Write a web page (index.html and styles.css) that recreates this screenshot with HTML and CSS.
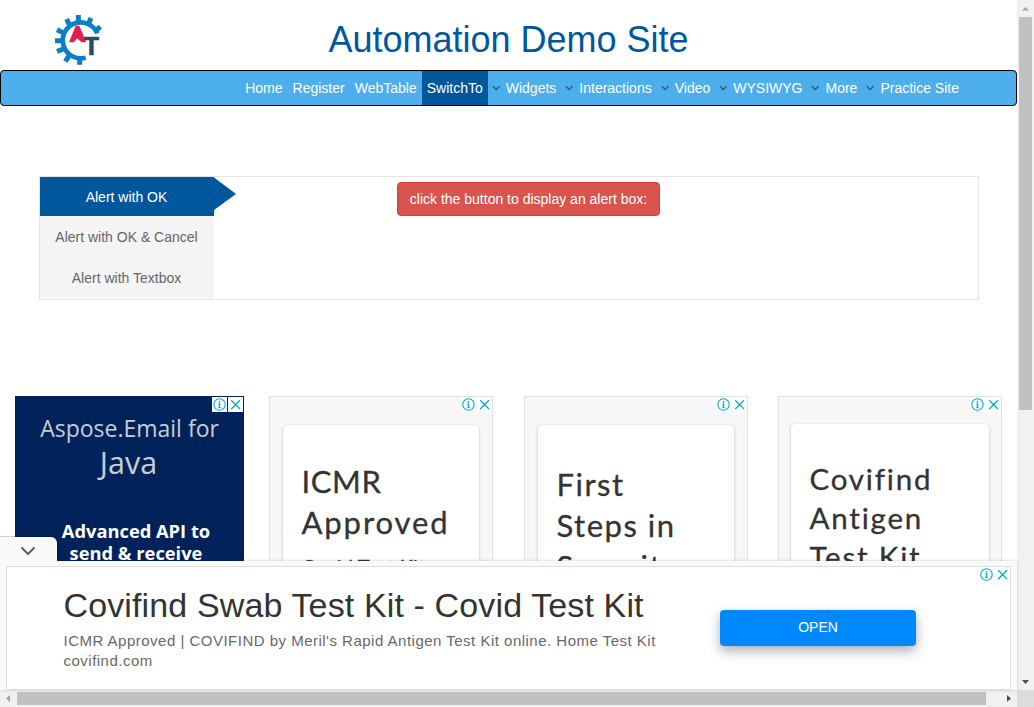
FILE: index.html
```html
<!DOCTYPE html>
<html lang="en">
<head>
<meta charset="utf-8">
<title>Automation Demo Site</title>
<link rel="stylesheet" href="styles.css">
</head>
<body>
<svg class="defs" width="0" height="0" aria-hidden="true">
  <symbol id="info" viewBox="0 0 15 15"><circle cx="7.5" cy="7.5" r="5.7" fill="none" stroke="#00aecd" stroke-width="1.1"/><path d="M7.5 3.900v1.500M7.500 6.300v4.800" fill="none" stroke="#00aecd" stroke-width="1.500"/><path d="M6.300 6.700h1.200M6.100 10.800h2.800" fill="none" stroke="#00aecd" stroke-width=".8"/></symbol>
  <symbol id="close" viewBox="0 0 15 15"><path d="M3.2 3.2l8.8 8.8M12 3.2l-8.8 8.8" fill="none" stroke="#00aecd" stroke-width="1.3"/></symbol>
  <symbol id="chev" viewBox="0 0 13 8"><path d="M4.8 2.2l3.4 3.4 3.4-3.4" fill="none" stroke="#26506e" stroke-width="1.2"/></symbol>
</svg>
<div class="window">
  <div class="page">
    <main class="content">
      <header class="header">
        <svg class="logo" viewBox="0 0 240 210">
          <g stroke="#0a7fc8" fill="none">
            <path d="M172 100A54 54 0 1 0 137 173" stroke-width="14"/>
            <path stroke-width="15" d="M115 68V45M144 75L153 54M163 96L181 80M89 76L80 57M71 99L51 89M65 122H45M70 147L51 154M87 168L76 184M119 173V194"/>
          </g>
          <path d="M87 127L107 77H118L139 127H124L112 115L102 127z" fill="#dc244b"/>
          <text class="logo-t" x="131" y="165">T</text>
        </svg>
        <h1 class="title">Automation Demo Site</h1>
      </header>
      <nav class="nav">
        <a class="link">Home</a><a class="link">Register</a><a class="link">WebTable</a><a class="link active">SwitchTo</a><svg class="chev"><use href="#chev"/></svg><a class="link">Widgets</a><svg class="chev"><use href="#chev"/></svg><a class="link">Interactions</a><svg class="chev"><use href="#chev"/></svg><a class="link">Video</a><svg class="chev"><use href="#chev"/></svg><a class="link">WYSIWYG</a><svg class="chev"><use href="#chev"/></svg><a class="link">More</a><svg class="chev"><use href="#chev"/></svg><a class="link">Practice Site</a>
      </nav>
      <section class="panel">
        <div class="tabs">
          <a class="tab selected">Alert with OK</a>
          <a class="tab">Alert with OK &amp; Cancel</a>
          <a class="tab">Alert with Textbox</a>
        </div>
        <svg class="arrow" viewBox="0 0 22 33"><path d="M0 0.500L22 17L0 33z" fill="#00579c"/></svg>
        <button class="alert">click the button to display an alert box:</button>
      </section>
      <section class="ads">
        <div class="ad aspose">
          <div class="choices"><svg><use href="#info"/></svg><svg><use href="#close"/></svg></div>
          <div class="as-small">Aspose.Email for</div>
          <div class="as-big">Java</div>
          <div class="as-bold">Advanced API to<br>send &amp; receive</div>
        </div>
        <div class="ad framed">
          <div class="choices"><svg><use href="#info"/></svg><svg><use href="#close"/></svg></div>
          <div class="card icmr"><div class="big"><span class="tight">ICMR</span><br>Approved</div><div class="sub">Covid Test Kit</div></div>
        </div>
        <div class="ad framed">
          <div class="choices"><svg><use href="#info"/></svg><svg><use href="#close"/></svg></div>
          <div class="card first"><div class="big">First<br>Steps in<br>Security</div></div>
        </div>
        <div class="ad framed">
          <div class="choices"><svg><use href="#info"/></svg><svg><use href="#close"/></svg></div>
          <div class="card covi"><div class="big">Covifind<br>Antigen<br>Test Kit</div></div>
        </div>
      </section>
    </main>
    <aside class="anchor">
      <div class="handle"><svg viewBox="0 0 16 10"><path d="M1.500 1.500L8 8l6.500-6.500" fill="none" stroke="#616161" stroke-width="2"/></svg></div>
      <div class="banner">
        <div class="copy">
          <div class="headline">Covifind Swab Test Kit - Covid Test Kit</div>
          <div class="desc">ICMR Approved | COVIFIND by Meril's Rapid Antigen Test Kit online. Home Test Kit<br>covifind.com</div>
        </div>
        <button class="open">OPEN</button>
        <div class="choices"><svg><use href="#info"/></svg><svg><use href="#close"/></svg></div>
      </div>
    </aside>
  </div>
  <div class="vbar">
    <svg viewBox="0 0 17 17"><path d="M5 10.500h7L8.500 7z" fill="#a3a3a3"/></svg>
    <div class="vthumb"></div>
    <svg viewBox="0 0 17 17"><path d="M5 7h7l-3.500 4z" fill="#505050"/></svg>
  </div>
  <div class="hbar">
    <svg viewBox="0 0 17 17"><path d="M10 5v7L6 8.500z" fill="#a3a3a3"/></svg>
    <div class="hthumb"></div>
    <svg viewBox="0 0 17 17"><path d="M7 5v7l4-3.500z" fill="#505050"/></svg>
  </div>
  <div class="corner"></div>
</div>
</body>
</html>
```
FILE: styles.css
```css
* { box-sizing: border-box; }
body { margin: 0; overflow: hidden; font: 14px/20px "Liberation Sans", Arial, sans-serif; background: #fff; }
svg { display: block; }
.defs { position: absolute; }
.window { display: grid; grid-template: 690px 17px / 1017px 17px; width: 1034px; height: 707px; }
.page { display: flex; flex-direction: column; min-width: 0; min-height: 0; }
.content { height: 561px; overflow: hidden; }
.header { display: flex; height: 70px; padding-left: 40px; }
.logo { width: 80px; height: 70px; }
.logo-t { font: bold 75px "Liberation Sans", Arial, sans-serif; fill: #2c4a61; stroke: #2c4a61; stroke-width: 2px; }
.title { margin: 20px 0 0 208.4px; font-size: 36px; line-height: 40px; font-weight: 400; color: #00579c; white-space: nowrap; }
.nav { display: flex; height: 36px; padding-left: 239.2px; border: 1px solid #000; border-radius: 4px; background: #4daeec; }
.link { padding: 7px 5px; color: #fff; white-space: nowrap; }
.active { background: #00579c; }
.chev { width: 13px; height: 8px; margin-top: 13px; flex: none; }
.panel { display: flex; width: 940px; height: 124px; margin: 70px 0 0 39px; border: 1px solid #e5e5e5; }
.tabs { width: 174px; background: #f4f4f4; }
.tab { display: block; height: 41px; padding: 11px 1px 0 0; text-align: center; color: #666; }
.selected { height: 39px; padding-top: 10px; background: #00579c; color: #fff; }
.arrow { width: 22px; height: 33px; }
.alert { width: 263px; height: 34px; margin: 5px 0 0 161px; padding: 0; border: 1px solid #d43f3a; border-radius: 4px; background: #d9534f; color: #fff; font: inherit; white-space: nowrap; }
.ads { display: grid; grid-template-columns: 254px 255px 254px 224px; margin: 96px 0 0 15px; }
.ad { position: relative; width: 224px; height: 230px; }
.framed { border: 1px solid #e2e2e2; background: #f7f7f7; }
.choices { position: absolute; top: 0; right: 0; display: flex; gap: 1px; }
.choices svg { width: 15px; height: 15px; background: #fff; }
.aspose { width: 229px; background: #00225b; color: #c8cdd2; text-align: center; font-family: "Open Sans", sans-serif; white-space: nowrap; }
.aspose .choices { top: 1px; right: 1px; }
.as-small { padding-top: 17px; font-size: 23px; line-height: 30px; }
.as-big { margin-top: 1px; padding-right: 2px; font-size: 30.5px; line-height: 36px; }
.as-bold { margin-top: 40px; padding-left: 13px; font-size: 18.3px; line-height: 22px; font-weight: 700; color: #fff; }
.card { width: 196px; height: 230px; margin: 28px 0 0 13px; border-radius: 5px; background: #fff; box-shadow: 0 1px 3px rgba(0,0,0,.25); color: #333; white-space: nowrap; }
.big { font-family: Lato, sans-serif; font-size: 31px; line-height: 41px; letter-spacing: 1.9px; -webkit-text-stroke: .3px #333; }
.tight { letter-spacing: .6px; }
.icmr { padding: 36px 0 0 18.5px; }
.sub { margin-top: 8px; font: 20px/30px Lato, sans-serif; letter-spacing: .2px; -webkit-text-stroke: .3px #333; }
.first { padding: 39px 0 0 18.5px; }
.first .big { letter-spacing: 1.5px; }
.covi { width: 198px; margin: 27px 0 0 12px; padding: 35px 0 0 18.5px; }
.covi .big { font-size: 29.5px; line-height: 39px; letter-spacing: 1.8px; }
.anchor { position: relative; height: 129px; padding: 5px 6px 0; background: #fafafa; box-shadow: 0 0 3px rgba(0,0,0,.2); }
.handle { position: absolute; left: 0; top: -24px; width: 57px; height: 30px; padding: 9px 0 0 20px; border-radius: 0 6px 0 0; background: #fafafa; box-shadow: 0 -1px 1px rgba(0,0,0,.2); clip-path: inset(-3px -3px 6px 0); }
.handle svg { width: 16px; height: 10px; }
.banner { position: relative; display: flex; height: 124px; padding: 0 0 0 57px; border: 1px solid #ddd; background: #fff; }
.copy { width: 656px; padding-top: 18px; white-space: nowrap; }
.headline { margin-left: -.5px; font-size: 34px; line-height: 40px; letter-spacing: .13px; color: #333; }
.desc { margin: 6px 0 0 -.5px; font-size: 15px; line-height: 20px; letter-spacing: .49px; color: #686868; }
.open { width: 196px; height: 36px; margin-top: 43px; padding: 0 0 2px; border: 0; border-radius: 4px; background: #0088ff; color: #fff; font: 14px/20px "Liberation Sans", Arial, sans-serif; box-shadow: 0 5px 12px rgba(40,55,80,.4); }
.vbar { display: flex; flex-direction: column; background: #f1f1f1; }
.vbar svg, .hbar svg { width: 17px; height: 17px; flex: none; }
.vthumb { width: 13px; height: 393px; margin: 0 0 263px 2px; background: #c1c1c1; }
.hbar { display: flex; background: #f1f1f1; }
.hthumb { width: 969px; height: 13px; margin: 2px 14px 0 0; background: #c1c1c1; }
.corner { background: #dcdcdc; }
```
